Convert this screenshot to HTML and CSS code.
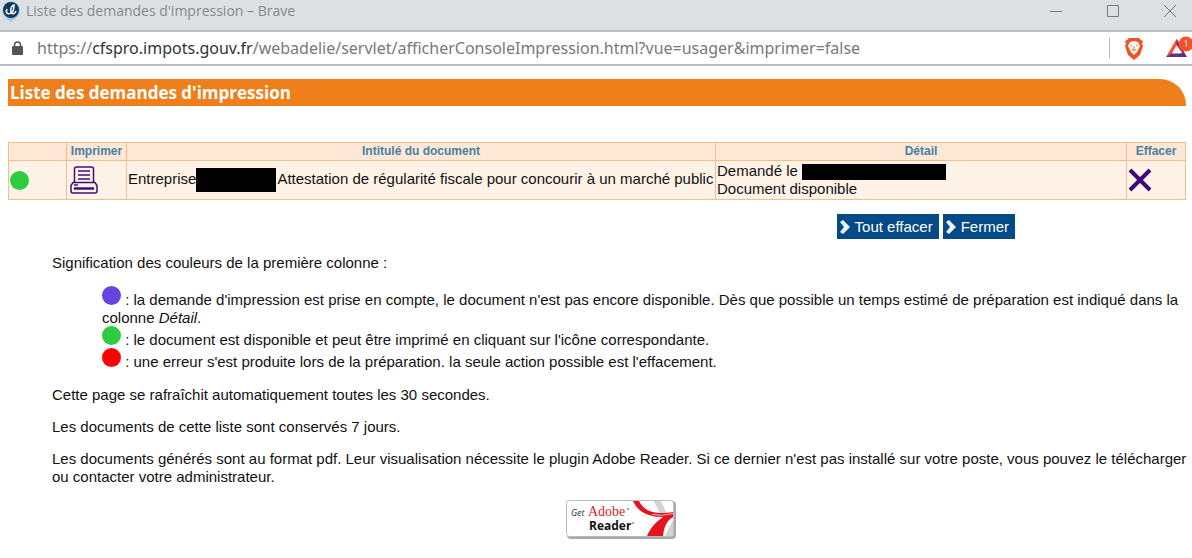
FILE: index.html
```html
<!DOCTYPE html>
<html lang="fr">
<head>
<meta charset="utf-8">
<title>Liste des demandes d'impression</title>
<link rel="stylesheet" href="styles.css">
</head>
<body>
<header class="titlebar">
  <svg class="app-icon" width="20" height="22" viewBox="0 0 20 22" aria-hidden="true">
    <path d="M10 1a9.500 9.500 0 0 1 5 17l-5 4-5-4a9.500 9.500 0 0 1 5-17z" fill="#9ccbea"/>
    <circle cx="10" cy="10" r="8" fill="#123a5e"/>
    <path d="M6 9c-2 4 1 6 4 4 2-1 3-4 3-8-2 0-4 4-3 7s4 2 5-1" fill="none" stroke="#fff" stroke-width="1.500"/>
  </svg>
  <span class="window-title">Liste des demandes d'impression – Brave</span>
  <div class="window-controls">
    <button class="window-button" aria-label="Réduire"><svg width="14" height="14" viewBox="0 0 14 14"><path d="M1 7.500h12"/></svg></button>
    <button class="window-button" aria-label="Agrandir"><svg width="14" height="14" viewBox="0 0 14 14"><path d="M1.500 1.500h11v11h-11z"/></svg></button>
    <button class="window-button" aria-label="Fermer la fenêtre"><svg width="14" height="14" viewBox="0 0 14 14"><path d="M1 1l12 12M13 1L1 13"/></svg></button>
  </div>
</header>
<div class="addressbar">
  <svg class="lock" width="11" height="14" viewBox="0 0 11 14" aria-hidden="true"><path d="M2.500 6V4a3 3 0 0 1 6 0v2" fill="none" stroke="#555" stroke-width="1.500"/><rect y="5" width="11" height="9" rx="1" fill="#555"/></svg>
  <span class="url">https://<span class="host">cfspro.impots.gouv.fr</span>/webadelie/servlet/afficherConsoleImpression.html?vue=usager&amp;imprimer=false</span>
  <div class="extensions">
    <svg width="20" height="23" viewBox="0 0 20 23" aria-hidden="true">
      <path d="M5 1h10l2 2 2 1-1 3 1 2-3 9-6 5-6-5L1 9l1-2-1-3 2-1z" fill="#f05423"/>
      <path d="M6 5l4-1 4 1 2 4-3 6-3 3-3-3-3-6z" fill="#fff"/>
      <path d="M6 8l2 1M14 8l-2 1M8 12l2 2 2-2M10 9v4" fill="none" stroke="#f05423" stroke-width=".8"/>
    </svg>
    <svg class="rewards" width="28" height="24" viewBox="0 0 28 24" aria-hidden="true">
      <path d="M11.500 3L1 21h4l6.500-11.500L14 6z" fill="#ff5028"/>
      <path d="M1 21h21l-3-4H7z" fill="#61308c"/>
      <path d="M11.500 3L22 21l-4-3-6.500-9z" fill="#9e1f63"/>
      <path d="M11.500 10L7 17.500h9z" fill="#fff"/>
      <circle cx="21" cy="8" r="7.500" fill="#f4512d"/>
      <text x="21" y="11" class="badge-text">1</text>
    </svg>
  </div>
</div>
<main class="page">
  <h1 class="banner">Liste des demandes d'impression</h1>
  <table class="requests">
    <thead><tr><th class="col-state"></th><th class="col-print">Imprimer</th><th class="col-name">Intitulé du document</th><th>Détail</th><th class="col-delete">Effacer</th></tr></thead>
    <tbody><tr>
      <td><span class="dot green"></span></td>
      <td><button class="icon-button print" aria-label="Imprimer"><svg width="28" height="28" viewBox="0 0 28 28" fill="none" stroke="#3f0f78" stroke-width="1.500"><path d="M4.500 16V3q0-2 2-2h15q2 0 2 2v13M8 5h12M8 9h12M8 13h12M3 16.500h22l2 3V25q0 2-2 2H3q-2 0-2-2v-5.500zM4 19h4"/><path d="M4 22.500h20" stroke-width="2.500"/></svg></button></td>
      <td class="name">Entreprise<span class="redacted company"></span>Attestation de régularité fiscale pour concourir à un marché public</td>
      <td>Demandé le <span class="redacted date"></span><br>Document disponible</td>
      <td><button class="icon-button" aria-label="Effacer"><svg width="24" height="24" viewBox="0 0 24 24"><path d="M2 2l20 20M22 2L2 22" stroke="#3c0b78" stroke-width="4"/></svg></button></td>
    </tr></tbody>
  </table>
  <div class="actions">
    <button class="action"><svg width="12" height="14" viewBox="0 0 12 14" aria-hidden="true"><path d="M1 2l3-2 7 7-7 7-3-2 4-5z" fill="#e8f4ff"/></svg>Tout effacer</button>
    <button class="action"><svg width="12" height="14" viewBox="0 0 12 14" aria-hidden="true"><path d="M1 2l3-2 7 7-7 7-3-2 4-5z" fill="#e8f4ff"/></svg>Fermer</button>
  </div>
  <section class="help">
    <p>Signification des couleurs de la première colonne :</p>
    <ul class="legend">
      <li><span class="dot blue"></span> : la demande d'impression est prise en compte, le document n'est pas encore disponible. Dès que possible un temps estimé de préparation est indiqué dans la colonne <em>Détail</em>.</li>
      <li><span class="dot green"></span> : le document est disponible et peut être imprimé en cliquant sur l'icône correspondante.</li>
      <li><span class="dot red"></span> : une erreur s'est produite lors de la préparation. la seule action possible est l'effacement.</li>
    </ul>
    <p>Cette page se rafraîchit automatiquement toutes les 30 secondes.</p>
    <p>Les documents de cette liste sont conservés 7 jours.</p>
    <p>Les documents générés sont au format pdf. Leur visualisation nécessite le plugin Adobe Reader. Si ce dernier n'est pas installé sur votre poste, vous pouvez le télécharger ou contacter votre administrateur.</p>
    <a class="reader" href="#" aria-label="Get Adobe Reader">
      <svg width="110" height="39" viewBox="0 0 110 39">
        <rect x="1" y="1" width="109" height="38" rx="4" fill="#aaa"/>
        <rect x=".5" y=".5" width="107" height="36" rx="3" fill="#fff" stroke="#bbb"/>
        <path d="M88 1h7l6 13h-7z" fill="#d3d3d3"/>
        <path d="M99 36l8-16v16z" fill="#d3d3d3"/>
        <path d="M67 1h6c5 10 15 14 34 11v5c-7 4-9 11-10 19H81c4-9 9-14 16-19C82 17 72 12 67 1z" fill="#e5131b"/>
        <path d="M86 14.500q10 2 21-1" fill="none" stroke="#fff" stroke-width=".7"/>
        <text x="5" y="16" class="reader-get">Get</text>
        <text x="22" y="16" class="reader-adobe">Adobe</text>
        <text x="23" y="30" class="reader-name">Reader</text>
        <path d="M61 9h2M66 23h2" stroke="#555"/>
      </svg>
    </a>
  </section>
</main>
</body>
</html>
```
FILE: styles.css
```css
* { box-sizing: border-box; }
body { margin: 0; background: #fff; color: #111; font: 15px/18px "Liberation Sans", Arial, sans-serif; }
button { border: 0; background: none; padding: 0; font: inherit; color: inherit; }
svg { display: block; flex: none; }
.titlebar { display: flex; align-items: center; height: 32px; padding: 0 15px 8px 1px; background: #dce0e3; border-bottom: 2px solid #bcc1c5; }
.window-title { margin-left: 5px; color: #85898c; font: 14px/20px "Open Sans", sans-serif; }
.window-controls { display: flex; gap: 43px; margin-left: auto; }
.window-button svg { fill: none; stroke: #777b7e; }
.addressbar { display: flex; align-items: center; height: 34px; padding-left: 12px; border-bottom: 2px solid #b9bcbf; overflow: hidden; }
.url { margin-left: 14px; color: #77797b; font: 16px/22px "Noto Sans", sans-serif; white-space: nowrap; }
.host { color: #333; }
.extensions { display: flex; align-items: center; gap: 21px; margin-left: auto; padding-left: 14px; border-left: 1px solid #b8b8b8; height: 20px; }
.rewards { margin-right: -1px; }
.badge-text { font: 9px "Open Sans", sans-serif; fill: #fff; text-anchor: middle; }
.page { padding: 13px 6px 0 8px; }
.banner { margin: 0; padding: 0 2px; height: 27px; border-radius: 0 26px 0 0; background: #ef7f1a; color: #fff; font: bold 17px/27px "Open Sans", sans-serif; }
.requests { width: 100%; margin-top: 36px; border-collapse: collapse; background: #fff3e8; }
.requests th, .requests td { border: 1px solid #f0bf8e; padding: 1px; text-align: left; }
.requests th { background: #ffe7d6; color: #4682a0; font: bold 12px/17px "Liberation Sans", sans-serif; text-align: center; padding: 0 1px; }
.col-state { width: 58px; }
.col-print { width: 60px; }
.col-name { width: 589px; }
.col-delete { width: 59px; }
.name { white-space: nowrap; }
.icon-button { display: block; }
.print { margin-left: 2px; }
.dot { display: inline-block; width: 19px; height: 19px; border-radius: 50%; }
td .dot { display: block; }
.green { background: #2ecc40; }
.blue { background: #6644e0; }
.red { background: #f00; }
.redacted { display: inline-block; background: #000; vertical-align: middle; }
.company { width: 80px; height: 24px; margin-right: 1px; }
.date { width: 144px; height: 16px; }
.actions { display: flex; gap: 4px; justify-content: flex-end; margin: 14px 171px 15px 0; }
.action { display: flex; align-items: center; gap: 4px; height: 25px; padding: 0 6px 0 2px; background: #034a87; color: #fff; }
.help { padding-left: 44px; margin-right: -4px; }
.help p { margin: 0 0 14px; }
.help .legend { list-style: none; margin: 15px 0; padding: 0 0 0 50px; }
.legend .dot { margin-top: -1px; }
.reader { display: block; width: 110px; margin: 0 auto; }
.reader-get { font: italic 9px "Open Sans", sans-serif; fill: #333; }
.reader-adobe { font: 14px "Liberation Serif", serif; fill: #dc2328; }
.reader-name { font: bold 12px "Open Sans", sans-serif; fill: #111; }
```
